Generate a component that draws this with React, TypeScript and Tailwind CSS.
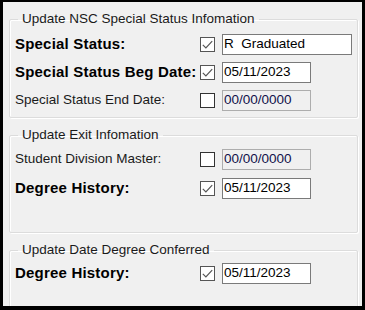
import type { ReactNode } from 'react';

type RowProps = {
  label: string;
  bold?: boolean;
  checked: boolean;
  value: string;
  wide?: boolean;
  disabled?: boolean;
};

function CheckBox({ checked }: { checked: boolean }) {
  return (
    <div className={`w-[15px] h-[15px] bg-white border ${checked ? 'border-[#555]' : 'border-[#333]'} flex items-center justify-center`}>
      {checked && (
        <svg width="13" height="13" viewBox="0 0 13 13" fill="none">
          <path d="M1.8 6.8 L4.9 9.9 L11.2 3.2" stroke="#555" strokeWidth="1.2" />
        </svg>
      )}
    </div>
  );
}

function FieldRow({ label, bold, checked, value, wide, disabled }: RowProps) {
  return (
    <div className="flex items-center h-[28px]">
      <div
        className={`w-[185px] shrink-0 whitespace-nowrap ${
          bold ? 'text-[15px] tracking-[0.2px] font-bold text-black' : 'text-[13.5px] text-[#1a1a1a]'
        }`}
      >
        {label}
      </div>
      <CheckBox checked={checked} />
      <div
        className={`ml-[7px] h-[21px] border flex items-center px-[1px] text-[13.5px] whitespace-pre ${wide ? 'w-[130px]' : 'w-[89px]'} ${
          disabled ? 'bg-[#f0f0f0] border-[#adadad] text-[#12124a]' : 'bg-white border-[#7a7a7a] text-black'
        }`}
      >
        {value}
      </div>
    </div>
  );
}

function GroupBox({ title, className, children }: { title: string; className: string; children: ReactNode }) {
  return (
    <fieldset className={`border border-[#dcdcdc] shadow-[inset_1px_1px_0_#fff,1px_1px_0_#fff] rounded-[2px] pl-[5px] ${className}`}>
      <legend className="ml-[3px] px-[4px] text-[13.5px] leading-[16px] text-[#1a1a1a]">{title}</legend>
      {children}
    </fieldset>
  );
}

export default function App() {
  return (
    <div className="w-[365px] h-[310px] bg-black pl-[3px] pt-[2px] pr-[3px] pb-[4px]">
      <div
        className="h-full bg-[#f0f0f0] overflow-hidden pl-[6px] pr-[4px] pt-[9px]"
        style={{ fontFamily: '"Liberation Sans", Arial, sans-serif' }}
      >
        <GroupBox title="Update NSC Special Status Infomation" className="h-[107px] pt-[3px]">
          <FieldRow label="Special Status:" bold checked value="R  Graduated" wide />
          <FieldRow label="Special Status Beg Date:" bold checked value="05/11/2023" />
          <FieldRow label="Special Status End Date:" checked={false} value="00/00/0000" disabled />
        </GroupBox>

        <GroupBox title="Update Exit Infomation" className="h-[106px] mt-[9px] pt-[2px]">
          <FieldRow label="Student Division Master:" checked={false} value="00/00/0000" disabled />
          <div className="mt-[1px]">
            <FieldRow label="Degree History:" bold checked value="05/11/2023" />
          </div>
        </GroupBox>

        <GroupBox title="Update Date Degree Conferred" className="h-[80px] mt-[9px] pt-[1px]">
          <FieldRow label="Degree History:" bold checked value="05/11/2023" />
        </GroupBox>
      </div>
    </div>
  );
}
